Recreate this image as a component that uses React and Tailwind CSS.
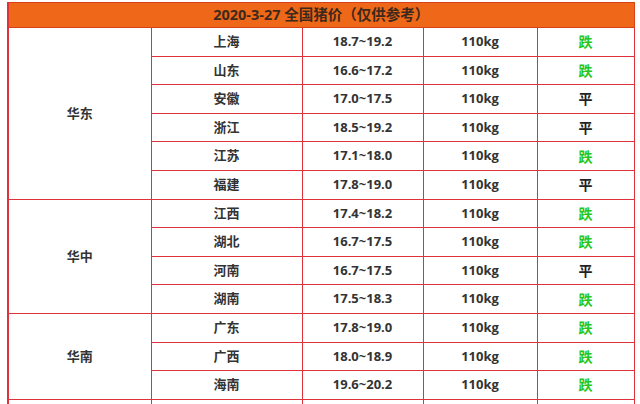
import React from 'react'

const groups = [
  {
    region: '华东',
    rows: [
      ['上海', '18.7~19.2', '跌'],
      ['山东', '16.6~17.2', '跌'],
      ['安徽', '17.0~17.5', '平'],
      ['浙江', '18.5~19.2', '平'],
      ['江苏', '17.1~18.0', '跌'],
      ['福建', '17.8~19.0', '平'],
    ],
  },
  {
    region: '华中',
    rows: [
      ['江西', '17.4~18.2', '跌'],
      ['湖北', '16.7~17.5', '跌'],
      ['河南', '16.7~17.5', '平'],
      ['湖南', '17.5~18.3', '跌'],
    ],
  },
  {
    region: '华南',
    rows: [
      ['广东', '17.8~19.0', '跌'],
      ['广西', '18.0~18.9', '跌'],
      ['海南', '19.6~20.2', '跌'],
    ],
  },
]

const cell = 'border border-[#e0323c] text-center p-0'

export default function App() {
  return (
    <div className="w-[640px] h-[404px] overflow-hidden bg-white pt-[2px] pl-[7px] font-['Open_Sans','Noto_Sans_CJK_SC',sans-serif] text-[13px] font-bold text-[#333]">
      <table className="w-[626px] border-collapse table-fixed border-l-2 border-l-[#e0323c]">
        <colgroup>
          <col className="w-[143px]" />
          <col className="w-[151px]" />
          <col className="w-[121px]" />
          <col className="w-[114px]" />
          <col className="w-[97px]" />
        </colgroup>
        <thead>
          <tr className="h-[25px]">
            <th colSpan={5} className="border border-[#d8401a] bg-[#ef6718] text-center text-[14.5px] font-bold text-[#3d2a1c] p-0">
              2020-3-27 全国猪价（仅供参考）
            </th>
          </tr>
        </thead>
        <tbody>
          {groups.map(g =>
            g.rows.map((r, i) => (
              <tr key={r[0]} className="h-[28.6px]">
                {i === 0 && (
                  <td rowSpan={g.rows.length} className={cell}>{g.region}</td>
                )}
                <td className={cell}>{r[0]}</td>
                <td className={cell}>{r[1]}</td>
                <td className={cell}>110kg</td>
                <td className={`${cell} text-[14px] ${r[2] === '跌' ? 'text-[#22c81e]' : 'text-[#222]'}`}>{r[2]}</td>
              </tr>
            ))
          )}
          <tr className="h-[28px]">
            <td className={cell}></td>
            <td className={cell}></td>
            <td className={cell}></td>
            <td className={cell}></td>
            <td className={cell}></td>
          </tr>
        </tbody>
      </table>
    </div>
  )
}
